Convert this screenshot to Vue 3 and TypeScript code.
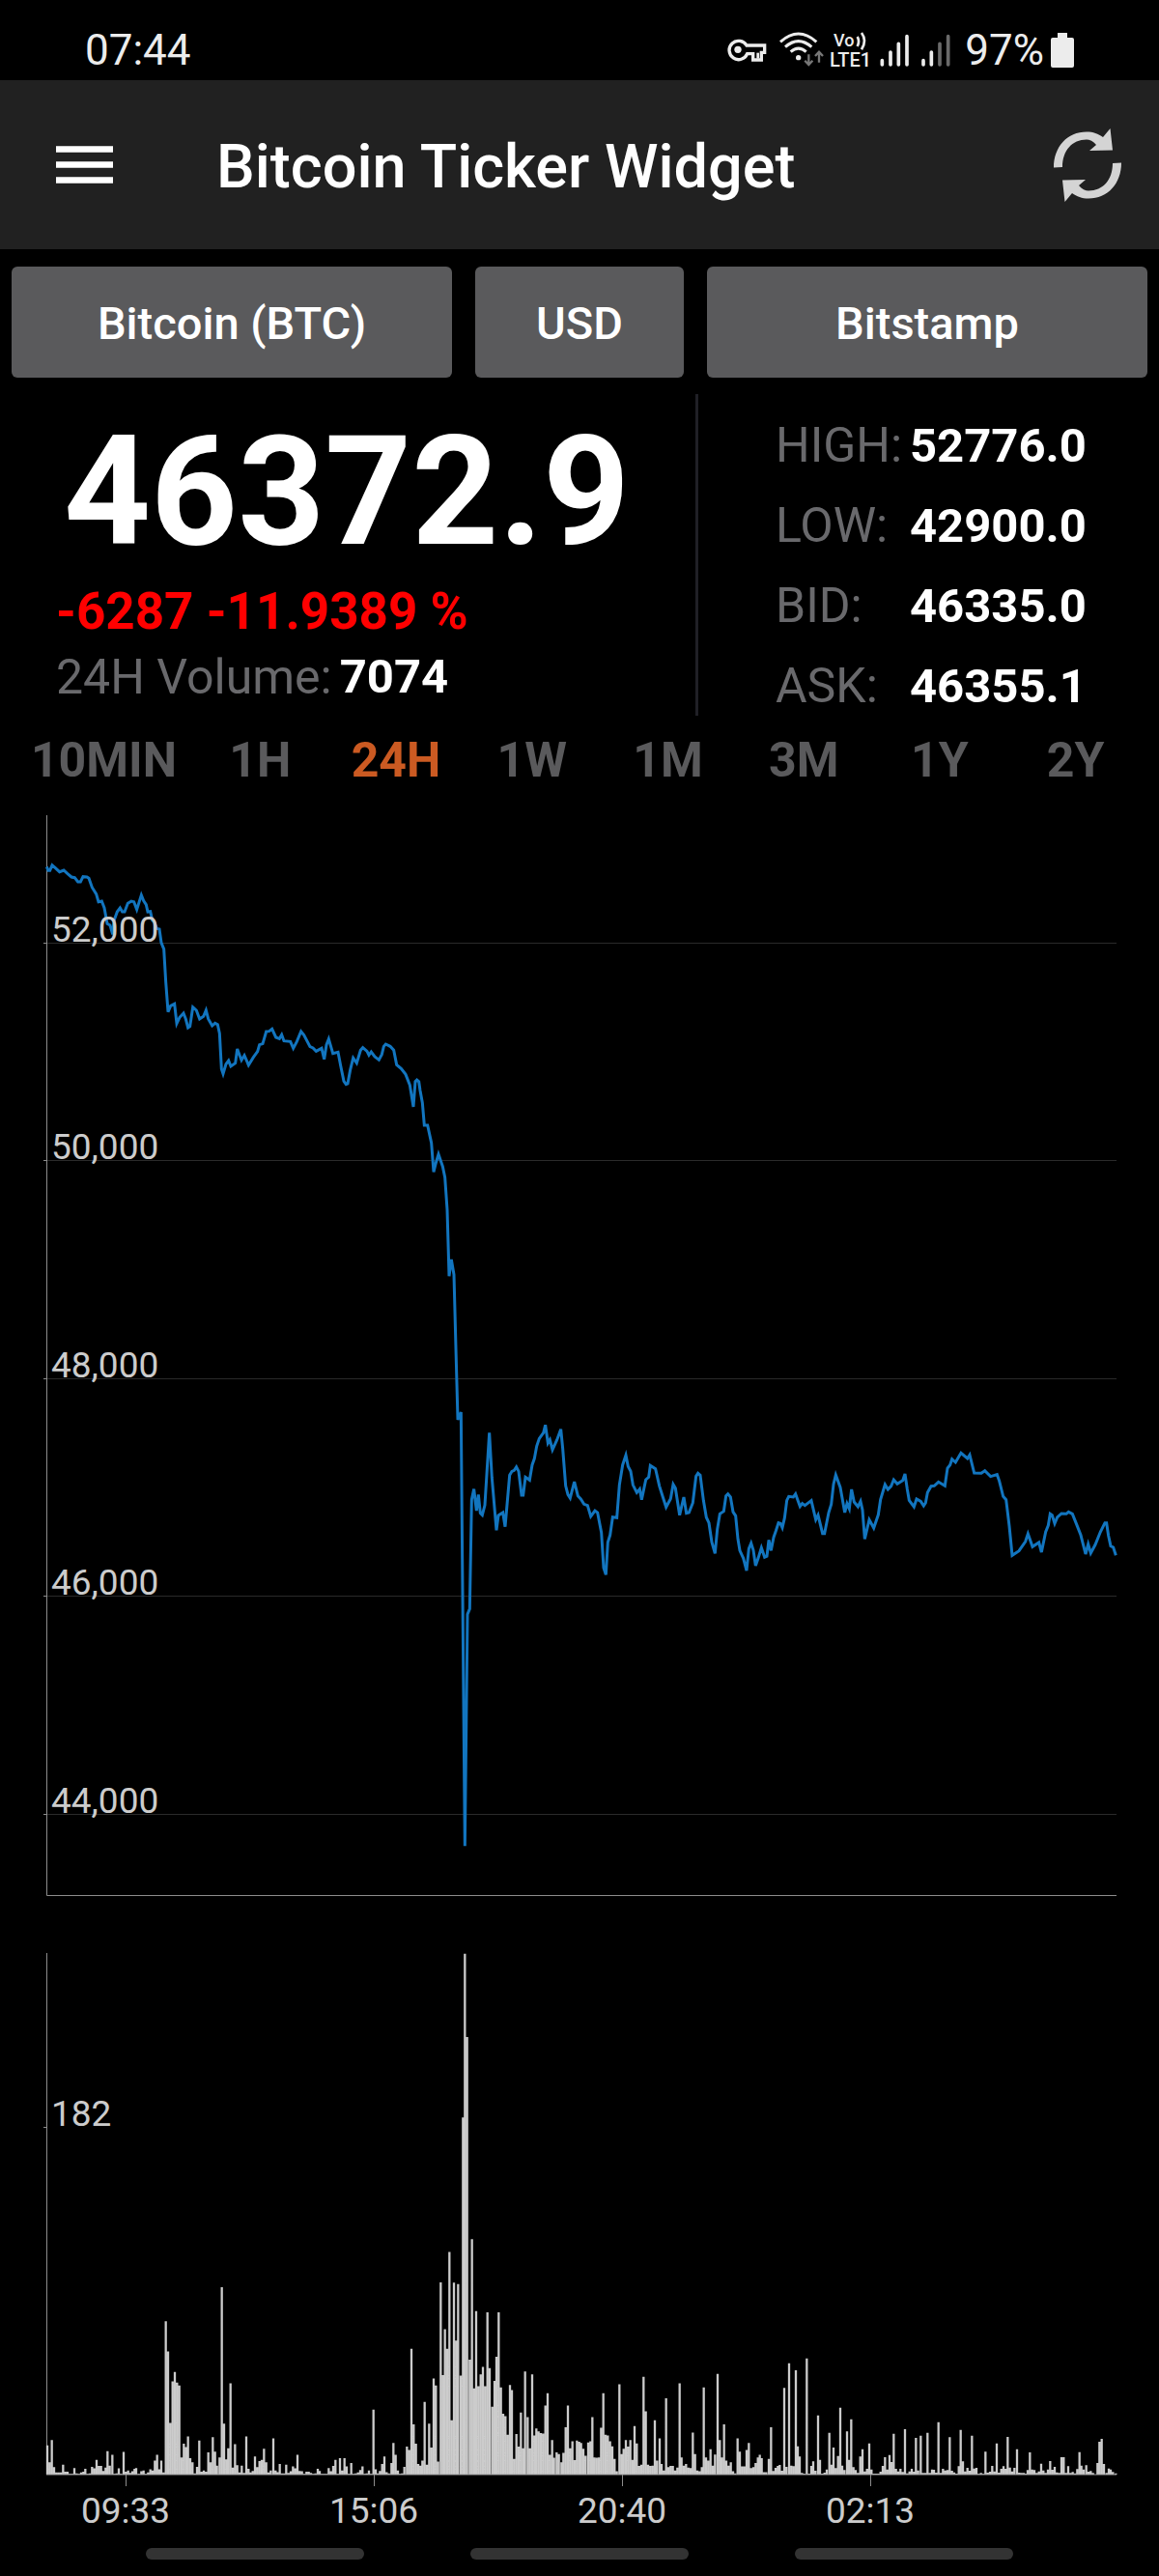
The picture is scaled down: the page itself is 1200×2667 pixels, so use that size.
<script setup lang="ts">
import { ref } from 'vue'

interface Trace {
  origin: [number, number]
  data: string
}

interface VolumeRun {
  origin: number
  scale: number
  data: string
}

const ranges: string[] = ['10MIN', '1H', '24H', '1W', '1M', '3M', '1Y', '2Y']
const activeRange = ref<string>('24H')

const quotes = [
  { label: 'HIGH:', value: '52776.0' },
  { label: 'LOW:', value: '42900.0' },
  { label: 'BID:', value: '46335.0' },
  { label: 'ASK:', value: '46355.1' },
]

const priceLevels = [
  { label: '52,000', y: 136 },
  { label: '50,000', y: 361 },
  { label: '48,000', y: 587 },
  { label: '46,000', y: 812 },
  { label: '44,000', y: 1038 },
]

const times = [
  { label: '09:33', x: 130 },
  { label: '15:06', x: 387 },
  { label: '20:40', x: 644 },
  { label: '02:13', x: 901 },
]

// Price samples, three units to a chart pixel, as "x,y" relative to each origin.
const traces: Trace[] = [
  {
    origin: [90, 0],
    data: `55,172 60,184 65,184 72,167 82,176 95,188 108,183 120,194 132,204 142,206 152,219 160,219 168,203 180,204
      186,208 196,236 209,257 216,281 226,279 234,300 243,349 252,354 260,382 264,340 274,312 283,300 290,312 297,312
      307,286 318,279 326,281 335,305 349,260 356,278 364,290 369,312 377,311 383,338 390,345 397,364 405,366 411,408
      419,428 425,530 432,623 440,604 452,598 459,659 468,640 480,627 487,645 494,672 500,668 509,608 520,618 530,645
      542,637 550,618 557,645 569,666 578,658 586,662 592,690 598,800 603,815 612,785 620,774 627,792 641,782 647,738
      660,773 669,758 682,788 697,764 710,746 716,725 726,722 737,684 746,683 755,676 767,702 778,706 785,694 792,713
      812,715 821,736 832,715 845,684 854,695 873,731 882,735 892,745 909,736 917,770 924,725 931,707 944,752 960,748
      968,790 978,838 985,848 990,846 998,803 1007,766 1018,782 1030,742 1037,734 1050,745 1056,757 1063,747 1074,762
      1087,772 1096,755 1102,730 1108,723 1122,730 1133,742 1142,787 1156,799 1170,817 1183,850 1194,918`,
  },
  {
    origin: [1200, 0],
    data: `90,839 95,834 101,839 105,867 112,905 118,975 128,975 140,1030 147,1120 154,1092 162,1065 175,1103 182,1137
      189,1237 195,1444 202,1392 210,1439 216,1668 222,1890 232,1866 236,2322 244,3214 252,2494 259,2477`,
  },
  {
    origin: [1440, 1830],
    data: `25,308 32,275 40,342 46,292 52,350 58,356 66,325 80,100 88,240 102,403 108,357 122,348 129,392 143,232
      150,220 157,217 164,206 171,220 180,294 185,294 192,238 205,247 213,200 220,180 227,142 235,118 248,100 254,76
      262,132 268,122 276,153 290,122 302,89 308,150 317,265 324,292 331,303 344,252 355,296 364,306 374,322 385,326
      395,360 408,342 416,348 428,410 435,520 442,541 448,440 455,418 463,362 476,364 484,262 494,200 504,170 511,205
      519,220 526,262 538,286 547,275 553,308 566,246 575,238 580,202 596,212 608,265 619,300 629,331 643,305 651,260
      658,272 671,356 684,300 692,350 700,348 712,318 722,235 728,226 735,232 745,310 754,363 762,380 771,440 781,475
      788,400 796,352 808,344 815,296 821,290 829,300 837,346 845,358 852,430 858,466 869,490 879,528 886,460 893,443
      900,465 907,513 915,490 925,457 935,487 942,484 948,433 955,466 963,425 970,405 978,380 984,382 990,395 997,365
      1004,310`,
  },
  {
    origin: [2340, 1860],
    data: `110,268 124,270 131,260 145,299 152,290 160,296 168,290 180,281 194,340 201,326 215,383 221,383 234,318
      242,292 249,230 256,201 270,240 284,318 291,290 298,306 305,246 313,285 325,300 333,283 339,310 346,400 360,340
      374,366 388,325 395,278 409,231 418,246 428,236 436,216 447,229 464,218 471,198 478,245 484,280 499,300 507,276
      520,283 529,297 535,288 541,256 552,236 562,235 575,223 595,235 603,180 611,170 617,152 628,162 645,133 665,150
      672,139 686,195 708,196 719,188 737,206 757,200 764,220 776,268 785,278 795,360 804,451 825,437 845,408 853,384
      867,424 887,411 895,441 908,378 916,358 922,322 928,326 936,352 944,333 957,321 972,322 979,316 991,322 1003,352
      1017,388 1032,447 1040,416 1048,444 1062,418 1078,378 1092,350 1097,350 1103,390 1110,422 1118,426 1126,451`,
  },
]

// Volume samples as "x,height" relative to each origin; scale is height units per pixel.
const volumeRuns: VolumeRun[] = [
  {
    origin: 90,
    scale: 2.351,
    data: `57,71 64,30 71,84 78,18 85,5 92,5 99,5 106,24 113,7 120,7 127,2 134,2 141,16 148,3 155,2 162,5 169,7 175,14
      182,2 189,3 196,19 203,15 210,36 217,21 224,21 231,9 238,17 244,57 251,22 259,48 265,2 272,3 279,15 286,2 294,55
      301,7 308,10 314,4 321,8 328,14 333,16 341,2 349,8 356,10 363,2 370,5 377,13 384,10 391,34 398,48 405,13 411,34
      418,5 425,373 432,300 439,126 446,227 453,250 460,224 467,217 474,42 481,75 488,67 494,93 501,40 508,30 515,3
      522,19 529,83 536,7 543,10 550,7 557,54 564,30 571,91 578,56 584,22 592,42 599,456 606,124 613,37 619,64 626,222
      633,17 640,74 647,23 654,5 661,22 668,4 675,93 682,14 688,5 695,9 702,44 709,18 716,33 723,36 730,63 737,30
      744,5 751,10 759,88 766,10 772,6 779,26 786,3 793,3 799,24 806,4 813,8 820,20 827,15 834,48 841,9 848,8 855,2
      862,7 869,7 876,4 883,2 890,3 897,14 903,9 910,2 917,2 924,2 931,16 938,8 945,21 952,36 959,2 966,40 973,10
      980,40 987,20 994,2 1001,28 1008,2 1015,3 1022,5 1029,11 1036,20 1043,2 1049,3 1056,10 1063,2 1070,158 1077,13
      1083,3 1090,9 1097,26 1104,44 1111,6 1118,3 1126,28 1132,77 1139,48 1146,10 1152,2 1159,3 1166,19 1174,68
      1181,60`,
  },
  {
    origin: 1200,
    scale: 2.351,
    data: `78,306 85,122 92,75 99,26 106,22 112,34 119,177 126,24 133,124 140,66 147,234 154,217 161,32 169,468 176,242
      182,354 189,306 196,542 203,132 210,467 217,326 223,464 231,241 238,869 244,1268 251,1065 259,280 266,573
      273,210 279,398 286,215 293,244 300,262 307,215 314,395 321,259 329,165 336,228 342,287 349,395 356,212 363,148
      370,142 377,97 384,218 390,206 397,38 404,99 411,68 418,151 425,64 431,251 439,140 446,64 453,244 460,95 466,112
      473,105 480,101 487,100 494,168 501,198 508,48 515,84 521,41 529,54 536,50 544,30 550,53 557,115 564,168 571,64
      578,81 585,35 592,83 599,80 605,77 612,63 619,46 627,78 634,81 640,140 646,42 653,41 660,42 667,114 674,198
      681,97 688,95 695,81 702,69 709,38 716,8 724,220 731,50 737,63 744,84 751,68 758,84 765,36 771,118 778,76
      785,21 792,24 799,238 806,154 813,24 820,21 827,22 834,132 841,34 849,88 855,26 862,10 869,186 876,18 883,21
      890,21 897,10 904,17 911,222 917,42 924,22 931,26 938,17 945,16 952,102 959,50 966,10 973,8 980,18 986,212
      993,42 1000,34 1007,62 1014,22 1021,49 1029,245 1036,84 1042,42 1049,122 1056,34 1063,22 1070,30 1077,8 1084,3
      1091,88 1098,56 1105,20 1112,20 1119,60 1126,77 1133,16 1140,18 1147,28 1154,42 1160,48 1166,40 1173,6 1180,6
      1188,38`,
  },
  {
    origin: 2340,
    scale: 3,
    data: `55,147 62,11 69,21 76,27 82,30 89,12 96,269 103,24 111,346 118,28 125,26 132,324 138,88 144,56 151,5 158,3
      166,361 173,3 180,27 186,41 193,12 201,184 207,46 214,3 221,6 228,16 236,130 243,31 249,84 256,20 263,58 270,208
      276,28 283,14 291,134 297,46 304,172 311,23 318,14 325,5 332,56 339,79 346,10 353,18 360,97 367,16 374,3 381,3
      388,3 395,9 402,27 409,54 416,16 423,61 429,39 436,127 443,18 450,10 457,18 464,8 471,141 478,4 485,10 492,18
      499,9 505,114 512,13 520,121 527,5 534,5 541,130 548,5 555,16 561,15 568,6 575,163 582,5 589,18 596,13 603,14
      610,116 617,12 624,7 631,3 638,26 644,139 651,41 658,10 665,21 672,12 679,121 686,19 693,21 700,2 707,5 714,2
      721,71 728,6 735,9 742,27 749,10 756,97 763,6 770,18 777,26 784,18 790,117 797,22 804,10 811,21 819,79 826,6
      833,5 840,5 847,3 852,14 859,69 866,16 873,14 880,5 887,10 894,34 901,13 908,5 915,16 922,42 929,15 936,24
      943,7 950,5 957,54 964,54 971,5 978,26 985,5 992,8 999,4 1006,17 1013,70 1019,28 1026,16 1034,29 1041,9 1048,11
      1055,5 1069,36 1075,102 1082,111 1089,33 1097,5 1104,19 1110,16 1117,8 1126,4`,
  },
]

const VOLUME_BASE = 562

function parsePairs(data: string): number[][] {
  return data.trim().split(/\s+/).map((pair) => pair.split(',').map(Number))
}

const pricePoints: string = traces
  .flatMap(({ origin, data }) =>
    parsePairs(data).map(([x, y]) => `${((x + origin[0]) / 3).toFixed(2)},${((y + origin[1]) / 3).toFixed(2)}`),
  )
  .join(' ')

const volumePath: string = volumeRuns
  .flatMap(({ origin, scale, data }) =>
    parsePairs(data).map(([x, h]) => `M${((x + origin) / 3).toFixed(2)} ${VOLUME_BASE}v-${(h / scale).toFixed(2)}`),
  )
  .join('')
</script>

<template>
  <div class="screen">
    <div class="status">
      <span class="clock">07:44</span>
      <svg class="radios" viewBox="36 30 702 132" aria-hidden="true">
        <g fill="none" stroke="#ececec">
          <path d="M99 81H155V103H145V126H119V107H101A29 29 0 1 1 99 81Z" stroke-width="10" stroke-linejoin="miter" />
          <path d="M134 104V122" stroke-width="8" />
          <g stroke-width="9">
            <path d="M204 70Q260 20 316 70" />
            <path d="M219 86Q260 50 301 86" />
            <path d="M236 101Q260 80 284 101" />
          </g>
          <g stroke="#777" stroke-width="7">
            <path d="M292 109V139M280 128L292 141L304 128" />
            <path d="M324 134V102M312 114L324 101L336 114" />
          </g>
          <path d="M443 54Q451 68 443 84M456 42Q474 66 456 94" stroke-width="8" />
          <g stroke-width="11" stroke-linecap="round">
            <path d="M520 128V141M546 102V141M571 76V141M597 53V141M648 128V141M673 102V141" />
            <path d="M699 76V141M725 53V141" stroke="#6a6a6a" />
          </g>
        </g>
        <circle cx="72" cy="94" r="11" fill="#ececec" />
        <circle cx="260" cy="119" r="8" fill="#ececec" />
        <text x="369" y="84" font-size="54">Vo</text>
        <text x="357" y="146" font-size="60">LTE1</text>
      </svg>
      <span class="percent">97%</span>
      <svg class="battery" viewBox="0 0 24 36" aria-hidden="true">
        <path d="M7 0h10v5h5q2 0 2 2v27q0 2-2 2H2q-2 0-2-2V7q0-2 2-2h5z" fill="#ececec" />
      </svg>
    </div>

    <header class="appbar">
      <button class="icon-button menu" type="button" aria-label="Menu">
        <svg viewBox="0 0 59 40" aria-hidden="true">
          <path d="M0 3.5H59M0 19.5H59M0 35.5H59" stroke="#fff" stroke-width="6.5" />
        </svg>
      </button>
      <h1>Bitcoin Ticker Widget</h1>
      <button class="icon-button refresh" type="button" aria-label="Refresh">
        <svg viewBox="0 0 70 76" aria-hidden="true">
          <g fill="#d4d4d4">
            <path d="M0 40.5C0 19 14 3.5 34 3.5C41 3.5 46 5.5 51 9L58.500 0L61 22.500L37 23L44 17C41 13 37 11.500 34 11.500C19 11.500 9 23 9 40Z" />
            <path
              transform="rotate(180 35 38)"
              d="M0 40.5C0 19 14 3.5 34 3.5C41 3.5 46 5.5 51 9L58.500 0L61 22.500L37 23L44 17C41 13 37 11.500 34 11.500C19 11.500 9 23 9 40Z"
            />
          </g>
        </svg>
      </button>
    </header>

    <div class="selectors">
      <button type="button">Bitcoin (BTC)</button>
      <button type="button">USD</button>
      <button type="button">Bitstamp</button>
    </div>

    <section class="stats">
      <div class="summary">
        <div class="price">46372.9</div>
        <div class="change">-6287 -11.9389 %</div>
        <div class="volume"><span>24H Volume:</span><b>7074</b></div>
      </div>
      <div class="divider"></div>
      <dl class="quotes">
        <template v-for="quote in quotes" :key="quote.label">
          <dt>{{ quote.label }}</dt>
          <dd>{{ quote.value }}</dd>
        </template>
      </dl>
    </section>

    <nav class="ranges">
      <button
        v-for="range in ranges"
        :key="range"
        type="button"
        :class="{ active: range === activeRange }"
        @click="activeRange = range"
      >{{ range }}</button>
    </nav>

    <svg class="chart" viewBox="0 0 1200 1160" role="img" aria-label="Price">
      <g class="grid">
        <path v-for="level in priceLevels" :key="level.label" :d="`M48 ${level.y}.5H1156`" />
      </g>
      <path class="axis" d="M48.5 4V1122.5H1156" />
      <path v-for="level in priceLevels" :key="level.label" class="axis" :d="`M45 ${level.y}.5H48`" />
      <polyline class="line" :points="pricePoints" />
      <text v-for="level in priceLevels" :key="level.label" x="53" :y="level.y - 1">{{ level.label }}</text>
    </svg>

    <svg class="chart" viewBox="0 0 1200 638" role="img" aria-label="Volume">
      <path class="axis" d="M48.5 22V562M45 202.5H48" />
      <path class="bars" :d="volumePath" />
      <path class="base" d="M48 562H1156" />
      <text x="53" y="201">182</text>
      <g v-for="time in times" :key="time.label">
        <path class="axis" :d="`M${time.x}.5 562V574`" />
        <text :x="time.x" y="612" text-anchor="middle">{{ time.label }}</text>
      </g>
    </svg>

    <div class="gestures">
      <span></span>
      <span></span>
      <span></span>
    </div>
  </div>
</template>

<style>
body {
  margin: 0;
  background: #000;
}
</style>

<style scoped>
.screen {
  background: #000;
  color: #fff;
  font-family: Roboto, "Liberation Sans", sans-serif;
}

button {
  margin: 0;
  padding: 0;
  border: 0;
  background: none;
  color: inherit;
  font: inherit;
  white-space: nowrap;
}

.status {
  display: flex;
  align-items: center;
  box-sizing: border-box;
  height: 83px;
  padding: 21px 88px 0;
  color: #ececec;
  font-size: 44px;
  line-height: 62px;
}

.clock {
  margin-right: auto;
}

.radios {
  width: 234px;
  height: 44px;
  margin-right: 13px;
}

.radios text {
  fill: #ececec;
  font-weight: 500;
}

.battery {
  width: 24px;
  height: 36px;
  margin-left: 7px;
}

.appbar {
  display: flex;
  align-items: center;
  box-sizing: border-box;
  height: 175px;
  padding: 0 39px 0 58px;
  background: #212121;
}

.icon-button svg {
  display: block;
  width: 100%;
}

.menu {
  width: 59px;
}

.refresh {
  width: 70px;
}

h1 {
  flex: 1;
  margin: 4px 0 0 107px;
  font-size: 63px;
  font-weight: 500;
  line-height: 72px;
}

.selectors {
  display: grid;
  grid-template-columns: 2fr 1fr 2fr;
  padding: 18px 0 17px;
}

.selectors button {
  height: 115px;
  margin: 0 12px;
  padding-top: 2px;
  border-radius: 6px;
  background: #5a5a5c;
  font-size: 47px;
  font-weight: 500;
}

.stats {
  display: flex;
  height: 342px;
}

.summary {
  flex: 0 0 60%;
  box-sizing: border-box;
  padding: 11px 0 0 58px;
}

.price {
  padding-left: 8px;
  font-size: 157px;
  font-weight: 700;
  line-height: 180px;
}

.change {
  color: #f00;
  font-size: 53px;
  font-weight: 700;
  font-kerning: none;
  line-height: 68px;
}

.volume {
  display: flex;
  gap: 8px;
  font-size: 50px;
  line-height: 68px;
}

.volume b,
.quotes dd {
  font-size: 49px;
  font-weight: 700;
}

.volume span,
.quotes dt {
  color: #69696c;
}

.divider {
  width: 3px;
  height: 333px;
  background: #202026;
}

.quotes {
  display: grid;
  grid-template-columns: 139px auto;
  align-content: start;
  margin: 0;
  padding: 12px 0 0 80px;
  font-size: 50px;
  line-height: 83px;
}

.quotes dd {
  margin: 0;
}

.ranges {
  display: grid;
  grid-template-columns: 13fr repeat(7, 10fr);
  padding: 0 16px 16px;
}

.ranges button {
  height: 74px;
  color: #5a5a5c;
  font-size: 50px;
  font-weight: 700;
}

.ranges button.active {
  color: #cb5a22;
}

.chart {
  display: block;
  width: 100%;
}

.chart text {
  fill: #ccc;
  font-size: 37px;
}

.grid {
  fill: none;
  stroke: #2a2a2a;
}

.axis {
  fill: none;
  stroke: #8c8c8c;
}

.line {
  fill: none;
  stroke: #1275bf;
  stroke-width: 3;
}

.bars {
  fill: none;
  stroke: #ccc;
  stroke-width: 2.3;
}

.base {
  stroke: #a0a0a0;
  stroke-width: 1;
}

.gestures {
  display: flex;
  justify-content: center;
  gap: 110px;
  padding-bottom: 17px;
}

.gestures span {
  width: 226px;
  height: 12px;
  border-radius: 6px;
  background: #333;
}
</style>
